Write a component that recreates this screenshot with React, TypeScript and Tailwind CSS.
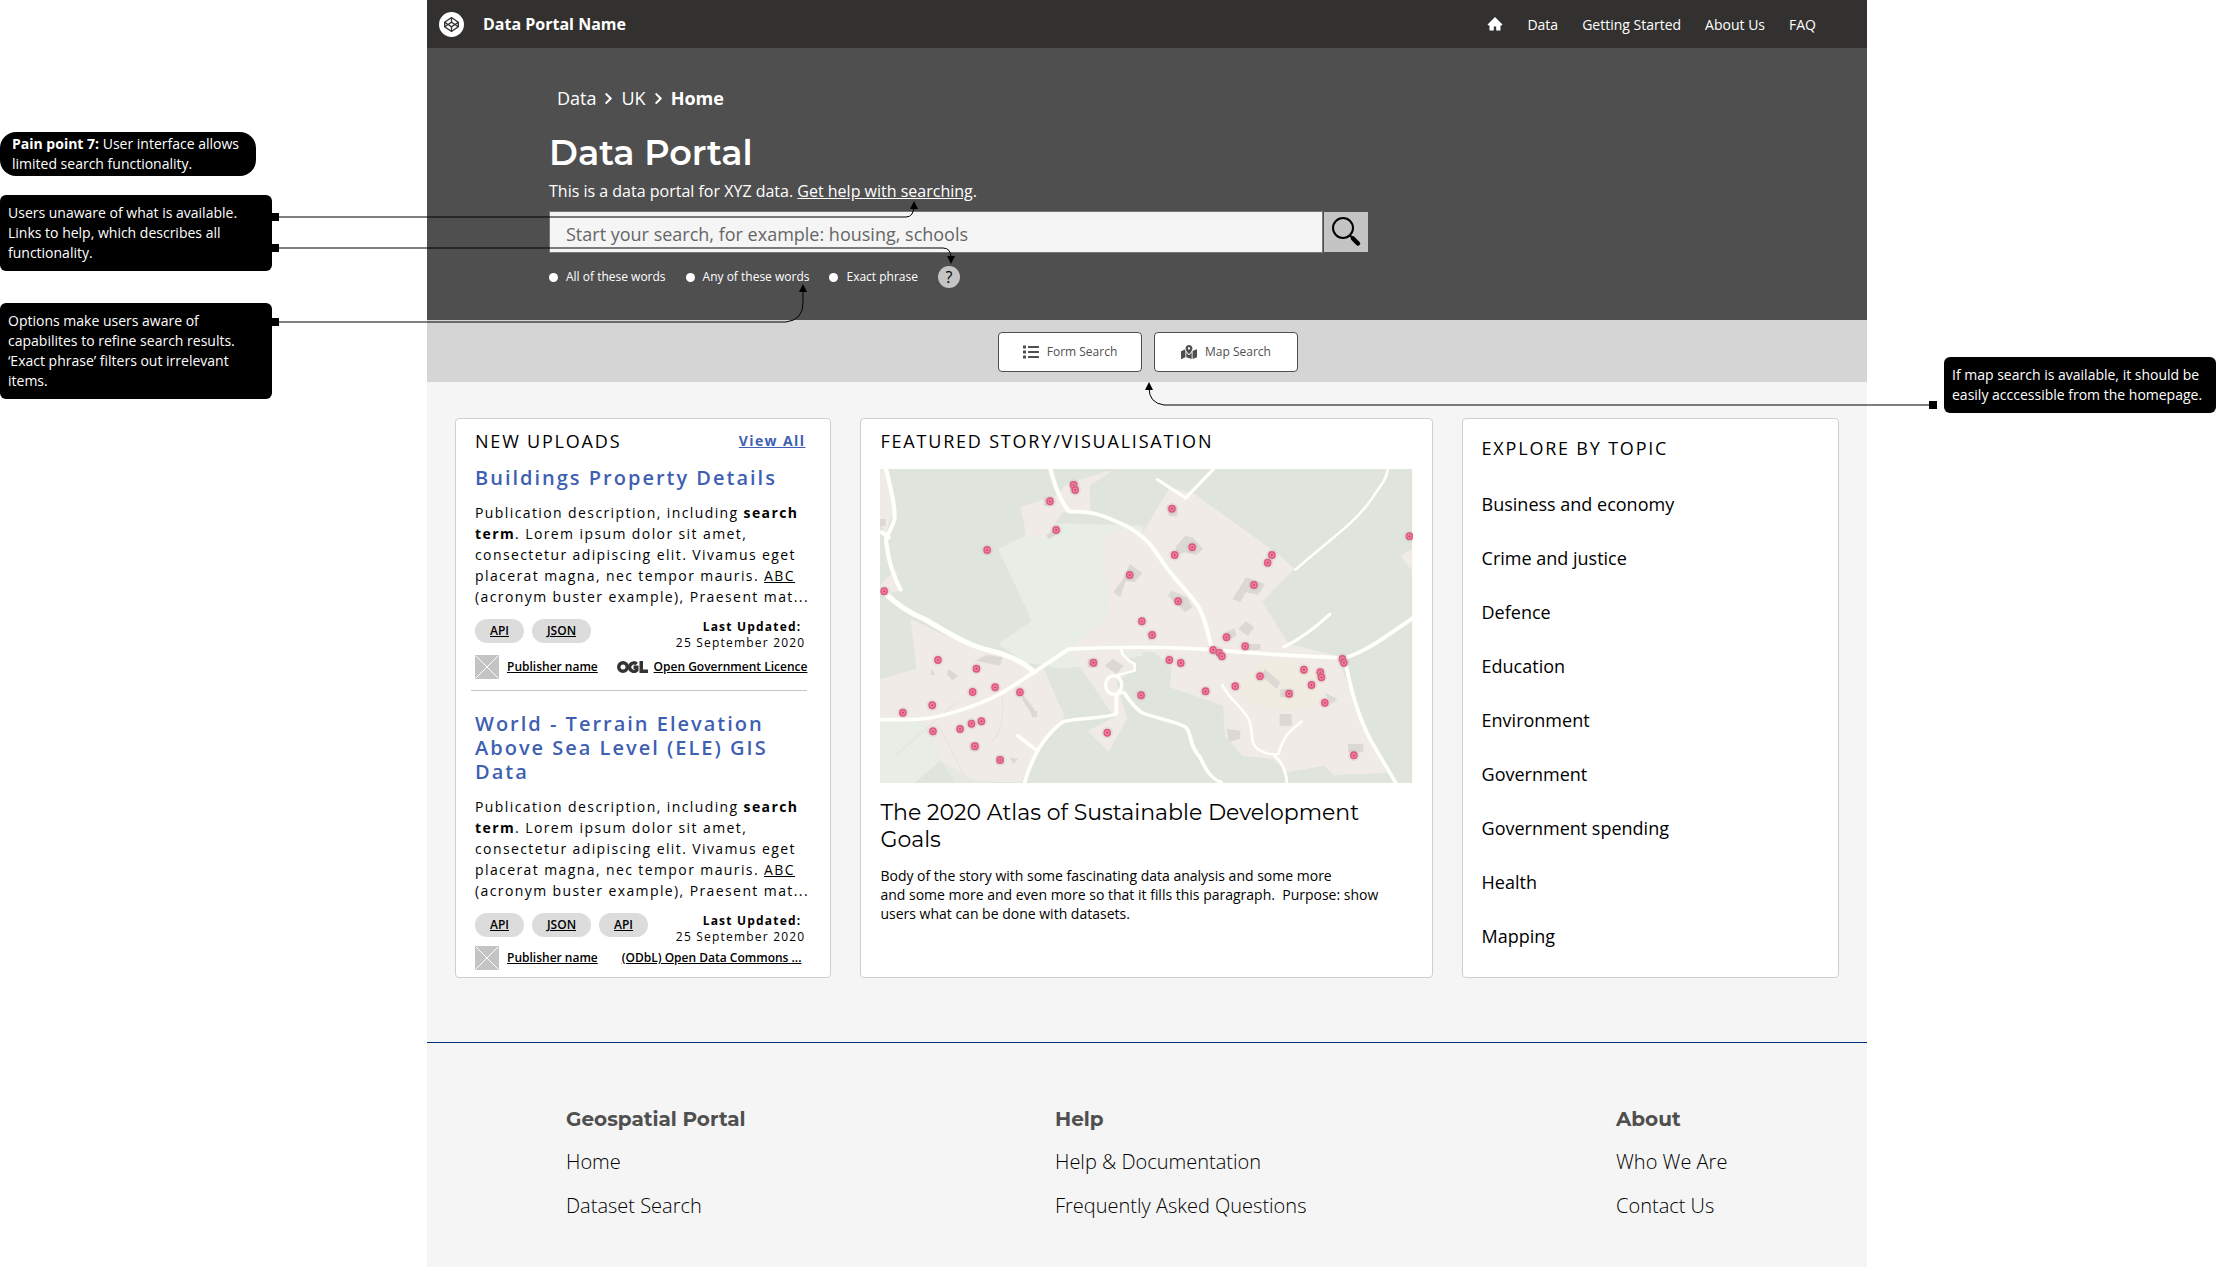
import React from "react";
import { FaList, FaMapMarkedAlt, FaCodepen, FaChevronRight } from "react-icons/fa";

const OPEN = "font-['Open_Sans','Noto_Sans',sans-serif]";

type Dataset = {
  title: string;
  tags: string[];
  licence: string;
  ogl: boolean;
};

const datasets: Dataset[] = [
  { title: "Buildings Property Details", tags: ["API", "JSON"], licence: "Open Government Licence", ogl: true },
  {
    title: "World - Terrain Elevation Above Sea Level (ELE) GIS Data",
    tags: ["API", "JSON", "API"],
    licence: "(ODbL) Open Data Commons ...",
    ogl: false,
  },
];

const topics = [
  "Business and economy",
  "Crime and justice",
  "Defence",
  "Education",
  "Environment",
  "Government",
  "Government spending",
  "Health",
  "Mapping",
];

function Logo() {
  return (
    <span className="flex size-[25px] items-center justify-center rounded-full bg-white text-[#32312f]">
      <FaCodepen size={15} />
    </span>
  );
}

function HomeIcon() {
  return (
    <svg className="size-4" viewBox="0 0 16 16" fill="#fff" aria-hidden="true">
      <path d="M8 1L15.500 8.500L14.500 9.500H13.500V14.500H9.200V10.500H6.800V14.500H2.500V9.500H1.500L0.500 8.500Z" />
    </svg>
  );
}

function OglMark() {
  return (
    <svg className="h-3 w-8 shrink-0" viewBox="0 0 64 24" aria-hidden="true" fill="none" stroke="#333" strokeWidth="7">
      <circle cx="12" cy="12" r="8.5" />
      <path d="M39.500 6A8.500 8.500 0 1 0 39.500 18.500V12.500H33" />
      <path d="M48.500 0V20.500H62" />
    </svg>
  );
}

function Publisher() {
  return (
    <svg className="size-6 shrink-0" viewBox="0 0 24 24" aria-hidden="true">
      <rect width="24" height="24" rx="1" fill="#c4c4c4" />
      <path d="M1 1L23 23M23 1L1 23" stroke="#fff" strokeWidth="1" />
    </svg>
  );
}

function MagnifierIcon() {
  return (
    <svg className="h-8 w-8" viewBox="0 0 32 32" fill="none" stroke="#000" aria-hidden="true">
      <circle cx="13" cy="12" r="10" strokeWidth="2" />
      <path d="M20 19.500L22.500 22" strokeWidth="2" />
      <path d="M23 22.500L28 27.500" strokeWidth="4.500" strokeLinecap="round" />
    </svg>
  );
}

const points: [number, number][] = [
  [508, 48], [512, 63], [446, 97], [462, 183], [281, 243], [11, 367], [766, 119], [819, 235], [773, 258],
  [1028, 258], [1017, 281], [981, 348], [655, 318], [782, 397], [687, 457], [714, 498], [1389, 202],
  [909, 505], [958, 532], [874, 543], [890, 551], [897, 562], [759, 573], [789, 582], [560, 581],
  [152, 573], [253, 599], [302, 655], [243, 669], [367, 670], [137, 709], [60, 731], [139, 787],
  [210, 780], [240, 764], [266, 757], [249, 832], [315, 873], [685, 679], [596, 791], [854, 667],
  [932, 652], [997, 622], [1073, 674], [1112, 602], [1155, 610], [1158, 625], [1132, 648], [1167, 701],
  [1213, 570], [1217, 581], [1243, 859],
];

function StoryMap() {
  return (
    <svg className="block h-[314px] w-full" viewBox="0 0 1396 942" preserveAspectRatio="none" role="img" aria-label="Map of the featured story">
      <rect width="1396" height="942" fill="#dfe4dc" />
      <g fill="#e8ede6">
        <path d="M310 240L380 200L380 160L690 170L690 560L480 600L380 580L310 525L398 455Z" />
        <path d="M0 755L125 760L160 875L90 942H0Z" />
        <path d="M160 880L200 942H300L290 880Z" fill="#e6e9e2" />
      </g>
      <g fill="#f0ebe6">
        <path d="M368 115L460 80L490 45L600 5L602 12L550 50L553 130L480 130L430 210L385 200Z" />
        <path d="M585 200L660 170L690 190L760 55L825 75L1050 260L1088 300L1005 400L1075 525L1200 560L1225 640L1330 912L1190 918L1165 890L1070 910L1030 870L950 860L905 800L900 710L850 690L760 655L765 600L720 550L495 540L600 440Z" />
        <path d="M80 450L230 530L370 570L395 610L430 600L485 745L400 870L370 940H310L240 930L160 875L120 760L0 745V630L95 600Z" />
        <path d="M495 545L640 545L670 595L620 640L648 750L600 848L545 785L615 745Z" />
        <path d="M1365 260L1396 240V305Z" />
        <path d="M0 150V0H18L40 100L15 200ZM0 350L40 300L55 365L10 375Z" />
      </g>
      <ellipse cx="1060" cy="650" rx="110" ry="75" fill="#f0eddd" opacity=".4" />
      <path d="M1000 400L1090 300M1005 400L1070 520M320 680Q330 780 290 820M40 860L200 700M150 760L230 940" stroke="#e4e3dd" strokeWidth="3" fill="none" />
      <g fill="#dcd8d3">
        <path d="M655 285L688 312L668 340L645 335L630 385L612 370L638 330Z" />
        <path d="M775 235L800 200L820 205L848 240L830 258L800 250L780 258Z" />
        <path d="M960 325L1010 345L992 378L960 370L945 400L925 390Z" />
        <path d="M765 365L805 385L820 415L800 430L755 380Z" />
        <path d="M940 480L960 457L982 475L965 500Z" />
        <path d="M905 490L930 478L935 500L910 515ZM965 525H998V543H965Z" />
        <path d="M1010 600L1050 640L1040 660L1000 620ZM1048 735H1080V770H1048Z" />
        <path d="M590 590L610 570L640 590L620 615ZM250 575L280 558L322 565L315 590Z" />
        <path d="M370 670L405 720L400 740L375 695ZM180 600L205 620L190 635L175 615Z" />
        <path d="M752 110H780V142H758ZM435 200L470 170L475 185L445 210Z" />
        <path d="M910 780L945 785V810L915 818ZM1228 825H1268V850H1228Z" />
        <path d="M430 85H455V110H430ZM495 35H520V72H500ZM545 570H570V595H545ZM700 490L725 505L705 515Z" />
        <path d="M1165 670L1200 690L1185 705ZM340 865L362 870L350 885ZM235 820H258V845H235ZM1050 660H1085V685H1050Z" />
        <path d="M0 150H15V170H0ZM135 600L145 617H133ZM305 860H325V885H305ZM398 725H412V745H398Z" />
      </g>
      <g fill="none" stroke="#fffffb" strokeLinecap="round" strokeLinejoin="round">
        <path strokeWidth="11" d="M15 -5C30 70 40 110 38 150C30 190 10 200 18 230C22 280 35 320 54 362" />
        <path strokeWidth="12" d="M5 190L22 205" />
        <path strokeWidth="15" d="M11 370Q60 425 120 452C190 500 240 535 300 548Q370 570 404 610" />
        <path strokeWidth="11" d="M-5 752H90C160 750 290 700 350 650L404 610L495 540C600 536 700 530 860 541C1000 555 1100 562 1220 567C1280 545 1330 500 1400 445" />
        <path strokeWidth="11" d="M446 -5C460 60 475 100 497 128C560 125 590 140 650 173C720 220 725 260 760 308C810 380 840 400 855 470L870 535" />
        <path strokeWidth="9" d="M728 32L802 87L875 0" />
        <path strokeWidth="7" d="M1333 -5C1328 40 1310 50 1290 90C1240 170 1180 210 1090 302" />
        <path strokeWidth="9" d="M1180 436Q1120 500 1060 534" />
        <path strokeWidth="10" d="M1220 567C1230 650 1260 760 1290 820L1355 945" />
        <path strokeWidth="7" d="M632 540Q635 565 668 585L668 605L620 620" />
        <ellipse cx="613" cy="648" rx="21" ry="28" strokeWidth="9" />
        <path strokeWidth="10" d="M620 675V735C580 750 530 745 480 758C430 800 400 860 378 945M362 800L412 845" />
        <path strokeWidth="10" d="M628 672L640 670Q665 715 690 733C730 750 770 755 803 775C820 800 810 830 840 865C855 905 870 930 895 940" />
        <path strokeWidth="7" d="M898 648C920 700 960 720 970 760C980 800 970 820 990 840Q1020 860 1045 855C1060 800 1070 790 1106 758M1035 860Q1065 890 1068 945" />
      </g>
      <g>
        {points.map(([x, y]) => (
          <g key={x + "-" + y}>
            <ellipse cx={x} cy={y} rx="15" ry="17" fill="#b9b4ae" opacity=".25" />
            <ellipse cx={x} cy={y} rx="10" ry="12" fill="#e0577f" />
            <ellipse cx={x} cy={y} rx="5" ry="6" fill="#e56b8e" stroke="#f49ab4" strokeWidth="2" />
            <ellipse cx={x} cy={y} rx="2" ry="2" fill="#b8315c" />
          </g>
        ))}
      </g>
    </svg>
  );
}

function DatasetEntry({ data }: { data: Dataset }) {
  return (
    <article>
      <h3 className="text-[20px] leading-6 font-semibold tracking-[2px] text-[#3f5fb3]">{data.title}</h3>
      <p className="my-3 text-[14px] leading-[21px] tracking-[1.4px]">
        Publication description, including <strong>search term</strong>. Lorem ipsum dolor sit amet, consectetur
        adipiscing elit. Vivamus eget placerat magna, nec tempor mauris.{" "}
        <a href="#acronym" className="underline">ABC</a> (acronym buster example), Praesent mat...
      </p>
      <div className="flex justify-between pr-1.5">
        <div className="flex gap-2">
          {data.tags.map((tag, i) => (
            <a
              key={i}
              href="#tag"
              className="flex h-6 items-center rounded-full bg-[#dcdcdc] px-[15px] text-[12px] font-semibold underline"
            >
              {tag}
            </a>
          ))}
        </div>
        <div className="text-right text-[12px] leading-4 whitespace-nowrap tracking-[1.2px]">
          <div className="pr-1 font-bold">Last Updated:</div>
          <div>25 September 2020</div>
        </div>
      </div>
      <div
        className={
          (data.ogl ? "mt-1 pr-1" : "mt-px pr-2.5") +
          " flex items-center justify-between text-[12px] font-semibold whitespace-nowrap"
        }
      >
        <a href="#publisher" className="flex items-center gap-2 underline">
          <Publisher />
          Publisher name
        </a>
        <a href="#licence" className="flex items-center gap-[5px] underline">
          {data.ogl && <OglMark />}
          {data.licence}
        </a>
      </div>
    </article>
  );
}

const cardClass = "rounded border border-[#cfcfcf] bg-white px-[19px]";

function FooterColumn({ title, links, className }: { title: string; links: string[]; className: string }) {
  return (
    <div className={className}>
      <h2 className="font-['Montserrat','Inter',sans-serif] text-[20px] leading-6 font-bold text-[#4f4f4f]">{title}</h2>
      <ul className="mt-[9px]">
        {links.map((l) => (
          <li key={l} className="text-[20px] leading-[44px] font-light">
            <a href="#footer">{l}</a>
          </li>
        ))}
      </ul>
    </div>
  );
}

function Connectors() {
  return (
    <svg
      className="pointer-events-none absolute top-0 left-0 h-[420px] w-[1950px]"
      viewBox="0 0 1950 420"
      fill="none"
      stroke="#000"
      strokeWidth="1"
      aria-hidden="true"
    >
      <path d="M279 217H906Q914 217 914 205" />
      <path d="M279 248H943Q951 248 951 258" />
      <path d="M279 322H786Q803 320 803 303V288" />
      <path d="M1931 405H1164Q1149 403 1149 388" />
      <g fill="#000" stroke="none">
        <path d="M272 213H279V221H272ZM272 244H279V252H272ZM272 318H279V326H272ZM1929 401H1937V409H1929Z" />
        <path d="M914 201L910 209H918ZM951 264L947 256H955ZM803 284L799 292H807ZM1149 382L1145 390H1153Z" />
      </g>
    </svg>
  );
}

export default function App() {
  return (
    <div className={OPEN + " relative flex min-h-screen bg-white text-black"}>
      <aside className="w-[427px] shrink-0 pt-[132px] text-[14px] leading-5 text-white">
        <p className="w-64 rounded-2xl bg-black px-3 py-[2px]">
          <strong>Pain point 7:</strong> User interface allows limited search functionality.
        </p>
        <p className="mt-[19px] w-[272px] rounded-md bg-black px-2 py-2">
          Users unaware of what is available. Links to help, which describes all functionality.
        </p>
        <p className="mt-8 w-[272px] rounded-md bg-black py-2 pr-6 pl-2">
          Options make users aware of capabilites to refine search results. ‘Exact phrase’ filters out irrelevant items.
        </p>
      </aside>

      <div className="flex min-w-0 flex-1 flex-col bg-[#f5f5f5]">
        <header className="flex h-12 items-center justify-between bg-[#32312f] pr-[51px] pl-3 text-white">
          <a href="#home" className="flex items-center gap-[19px] text-[16px] font-bold">
            <Logo />
            Data Portal Name
          </a>
          <nav className="flex items-center gap-6 text-[14px]">
            <a href="#home" aria-label="Home"><HomeIcon /></a>
            <a href="#data">Data</a>
            <a href="#start">Getting Started</a>
            <a href="#about">About Us</a>
            <a href="#faq">FAQ</a>
          </nav>
        </header>

        <section className="h-[272px] bg-[#4f4f4f] pt-9 pl-[122px] text-white">
          <nav aria-label="Breadcrumb" className="flex items-center gap-1.5 pl-2 text-[18px] leading-7">
            <a href="#data">Data</a>
            <FaChevronRight size={13} />
            <a href="#uk">UK</a>
            <FaChevronRight size={13} />
            <strong>Home</strong>
          </nav>
          <h1 className="mt-[21px] font-['Montserrat','Inter',sans-serif] text-[35px] leading-10 font-semibold">Data Portal</h1>
          <p className="mt-1.5 text-[16px] leading-6">
            This is a data portal for XYZ data. <a href="#help" className="underline">Get help with searching</a>.
          </p>
          <form className="mt-2" onSubmit={(e) => e.preventDefault()}>
            <div className="flex h-[42px]">
              <input
                type="text"
                aria-label="Search"
                placeholder="Start your search, for example: housing, schools"
                className="w-[774px] border border-[#777] bg-[#f5f5f5] px-4 pt-1 text-[18px] text-black placeholder:text-[#666]"
              />
              <button
                type="submit"
                aria-label="Search"
                className="flex w-[46px] items-center justify-center border border-[#4f4f4f] bg-[#c4c4c4]"
              >
                <MagnifierIcon />
              </button>
            </div>
            <div className="mt-3 flex h-6 items-center text-[12px]">
              {["All of these words", "Any of these words", "Exact phrase"].map((o) => (
                <label key={o} className="mr-5 flex items-center gap-2">
                  <input type="radio" name="mode" className="size-[9px] appearance-none rounded-full bg-white" />
                  {o}
                </label>
              ))}
              <button
                type="button"
                aria-label="Search help"
                className="flex size-[22px] items-center justify-center rounded-full bg-[#c4c4c4] text-[16px] text-black"
              >
                ?
              </button>
            </div>
          </form>
        </section>

        <div className="flex h-[62px] items-center justify-center gap-3 bg-[#d5d5d5] pt-0.5 pl-0.5 text-[12px] text-[#4f4f4f]">
          <button type="button" className="flex h-10 w-36 items-center justify-center gap-2 rounded border border-[#4f4f4f] bg-white">
            <FaList size={16} />
            Form Search
          </button>
          <button type="button" className="flex h-10 w-36 items-center justify-center gap-2 rounded border border-[#4f4f4f] bg-white">
            <FaMapMarkedAlt size={16} />
            Map Search
          </button>
        </div>

        <main className="mt-9 grid grid-cols-[377fr_573fr_378fr] gap-[29px] px-7">
          <section className={cardClass + " pb-[7px]"}>
            <div className="flex items-center justify-between pt-2 pr-1.5 leading-7">
              <h2 className="text-[18px] tracking-[1.8px]">NEW UPLOADS</h2>
              <a href="#all" className="text-[14px] font-bold tracking-[1.4px] text-[#3f5fb3] underline">View All</a>
            </div>
            <div className="mt-[11px]">
              <DatasetEntry data={datasets[0]} />
              <hr className="mt-[11px] mr-1 mb-[21px] -ml-1 border-[#c4c4c4]" />
              <DatasetEntry data={datasets[1]} />
            </div>
          </section>

          <section className={cardClass}>
            <h2 className="pt-2 text-[18px] leading-7 tracking-[1.8px]">FEATURED STORY/VISUALISATION</h2>
            <div className="mt-[14px]">
              <StoryMap />
            </div>
            <h3 className="mt-4 font-['Montserrat','Inter',sans-serif] text-[22px] leading-[27px]">
              The 2020 Atlas of Sustainable Development Goals
            </h3>
            <p className="mt-[13px] text-[14px] leading-[19px] whitespace-pre-line">
              {"Body of the story with some fascinating data analysis and some more\nand some more and even more so that it fills this paragraph.\u00a0 Purpose: show users what can be done with datasets."}
            </p>
          </section>

          <section className={cardClass}>
            <h2 className="pt-[15px] text-[18px] leading-7 tracking-[1.8px]">EXPLORE BY TOPIC</h2>
            <ul className="mt-[15px] text-[18px] leading-[54px]">
              {topics.map((t) => (
                <li key={t}><a href="#topic">{t}</a></li>
              ))}
            </ul>
          </section>
        </main>

        <footer className="mt-16 flex border-t border-[#003078] pt-16 pl-[139px]">
          <FooterColumn className="w-[489px]" title="Geospatial Portal" links={["Home", "Dataset Search"]} />
          <FooterColumn className="w-[561px]" title="Help" links={["Help & Documentation", "Frequently Asked Questions"]} />
          <FooterColumn className="flex-1" title="About" links={["Who We Are", "Contact Us"]} />
        </footer>
      </div>

      <aside className="w-[349px] shrink-0 pt-[357px] pl-[77px]">
        <p className="rounded-md bg-black px-2 py-2 text-[14px] leading-5 text-white">
          If map search is available, it should be easily acccessible from the homepage.
        </p>
      </aside>
      <Connectors />
    </div>
  );
}
